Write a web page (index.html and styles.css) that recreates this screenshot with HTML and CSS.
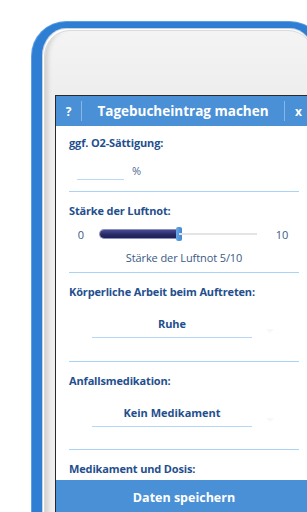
FILE: index.html
```html
<!DOCTYPE html>
<html lang="de">
<head>
    <meta charset="UTF-8">
    <meta name="viewport" content="width=device-width, initial-scale=1.0">
    <title>Tagebucheintrag machen</title>
    <link rel="stylesheet" href="styles.css">
</head>
<body>

<div class="phone">
    <div class="bezel">
        <div class="screen">

            <div class="topbar">
                <div class="bar-btn">?</div>
                <div class="bar-title">Tagebucheintrag machen</div>
                <div class="bar-btn bar-close">x</div>
            </div>

            <div class="content">

                <div class="field field-o2">
                    <label class="field-label" for="o2">ggf. O2-Sättigung:</label>
                    <div class="o2-row">
                        <input type="text" id="o2" class="o2-input">
                        <span class="unit">%</span>
                    </div>
                </div>

                <div class="field field-slider">
                    <div class="field-label">Stärke der Luftnot:</div>
                    <div class="slider-row">
                        <span class="slider-min">0</span>
                        <div class="track">
                            <div class="track-fill" style="width: 50%"></div>
                            <div class="track-thumb"></div>
                            <div class="track-rest"></div>
                        </div>
                        <span class="slider-max">10</span>
                    </div>
                    <div class="slider-caption">Stärke der Luftnot 5/10</div>
                </div>

                <div class="field field-select">
                    <div class="field-label">Körperliche Arbeit beim Auftreten:</div>
                    <div class="select-row">
                        <div class="select-value">Ruhe</div>
                        <div class="select-arrow"></div>
                    </div>
                </div>

                <div class="field field-select">
                    <div class="field-label">Anfallsmedikation:</div>
                    <div class="select-row">
                        <div class="select-value">Kein Medikament</div>
                        <div class="select-arrow"></div>
                    </div>
                </div>

                <div class="field">
                    <div class="field-label">Medikament und Dosis:</div>
                </div>

            </div>

            <div class="save-btn">Daten speichern</div>
        </div>
    </div>
</div>

</body>
</html>
```

FILE: styles.css
```css
html, body {
    margin: 0;
    padding: 0;
    height: 100%;
    overflow: hidden;
    background: #ffffff;
    font-family: "Open Sans", "Noto Sans", sans-serif;
}

/* phone frame */
.phone {
    margin: 22px 0 0 32px;
    width: 272px;
    height: 600px;
    border: solid #2e7ed3;
    border-width: 6px 10px 0 10px;
    border-radius: 34px 34px 0 0;
    background: #ffffff;
    box-shadow: inset 0 0 0 1px #c9d3dc, 0 0 0 1px #5c9fe2;
}
.bezel {
    margin: 2px 0 0 2px;
    height: 100%;
    padding: 64px 0 0 10px;
    border: 1px solid #dadada;
    border-radius: 26px 26px 0 0;
    background: linear-gradient(to bottom, #f4f4f4 0, #eeeeee 60px), #f0f0f0;
    box-shadow: inset 9px 0 4px -6px #d0d0d0;
}

.screen {
    width: 256px;
    height: 440px;
    border: 1px solid #2a2a2a;
    background: #ffffff;
    display: flex;
    flex-direction: column;
}

/* top bar */
.topbar {
    height: 30px;
    flex: none;
    display: flex;
    align-items: center;
    background: #4a90d6;
    color: #ffffff;
    font-weight: bold;
}
.bar-btn {
    width: 25px;
    text-align: center;
    font-size: 12px;
}
.bar-close {
    width: 27px;
}
.bar-title {
    flex: 1;
    text-align: center;
    font-size: 13.5px;
    border-left: 1px solid rgba(255, 255, 255, 0.35);
    border-right: 1px solid rgba(255, 255, 255, 0.35);
    line-height: 20px;
}

/* form body */
.content {
    height: 354px;
    flex: none;
    overflow: hidden;
    padding: 0 13px;
}
.field {
    padding-top: 11px;
    border-bottom: 1px solid #abd3f6;
    box-sizing: border-box;
}
.field:last-child {
    border-bottom: none;
}
.field-label {
    display: block;
    font-size: 11px;
    line-height: 16px;
    font-weight: bold;
    letter-spacing: -0.15px;
    color: #1f4f8e;
}

.field-o2 {
    padding-top: 9px;
    height: 66px;
}
.o2-row {
    display: flex;
    align-items: flex-end;
    margin: 13px 0 0 8px;
}
.o2-input {
    width: 47px;
    height: 15px;
    padding: 0;
    border: none;
    border-bottom: 1px solid #b9dbf8;
    outline: none;
    box-sizing: border-box;
}
.unit {
    margin-left: 8px;
    font-size: 11px;
    line-height: 16px;
    color: #4d6a92;
    position: relative;
    top: -1px;
}

.field-slider {
    height: 81px;
}
.slider-row {
    display: flex;
    align-items: center;
    height: 16px;
    margin-top: 7px;
    font-size: 11px;
    color: #3b5a86;
}
.slider-min {
    width: 24px;
    text-align: center;
    margin-right: 7px;
}
.slider-max {
    width: 24px;
    text-align: center;
    margin-left: 13px;
}
.track {
    width: 157px;
    height: 14px;
    display: flex;
    align-items: center;
}
.track-fill {
    height: 8px;
    border-radius: 4px 0 0 4px;
    background: linear-gradient(to bottom, #464b93, #262963 60%, #1e2157);
    box-shadow: 0 0 0 1px #8a8fc0;
}
.track-thumb {
    width: 6px;
    height: 14px;
    margin-left: -3px;
    border-radius: 2px;
    background: linear-gradient(to right, #6aa9e8, #3f86d3);
}
.track-rest {
    flex: 1;
    height: 2px;
    margin-left: -3px;
    background: #e4e4e4;
}
.slider-caption {
    margin-top: 8px;
    text-align: center;
    font-size: 11px;
    line-height: 16px;
    letter-spacing: -0.1px;
    color: #3b5a86;
}

.field-select {
    height: 89px;
}
.field-select + .field-select {
    height: 88px;
}
.select-row {
    display: flex;
    align-items: center;
    margin-top: 16px;
}
.select-value {
    width: 160px;
    margin-left: 23px;
    padding-bottom: 5px;
    border-bottom: 1px solid #b4d7f7;
    text-align: center;
    font-size: 11px;
    line-height: 16px;
    font-weight: bold;
    color: #1f4f8e;
}
.select-arrow {
    margin: 8px 0 0 14px;
    width: 0;
    height: 0;
    border-left: 4px solid transparent;
    border-right: 4px solid transparent;
    border-top: 4px solid #f7f7f7;
}

/* footer button */
.save-btn {
    height: 40px;
    flex: none;
    line-height: 36px;
    text-align: center;
    background: #4a90d6;
    color: #ffffff;
    font-size: 12.5px;
    font-weight: bold;
}
```
